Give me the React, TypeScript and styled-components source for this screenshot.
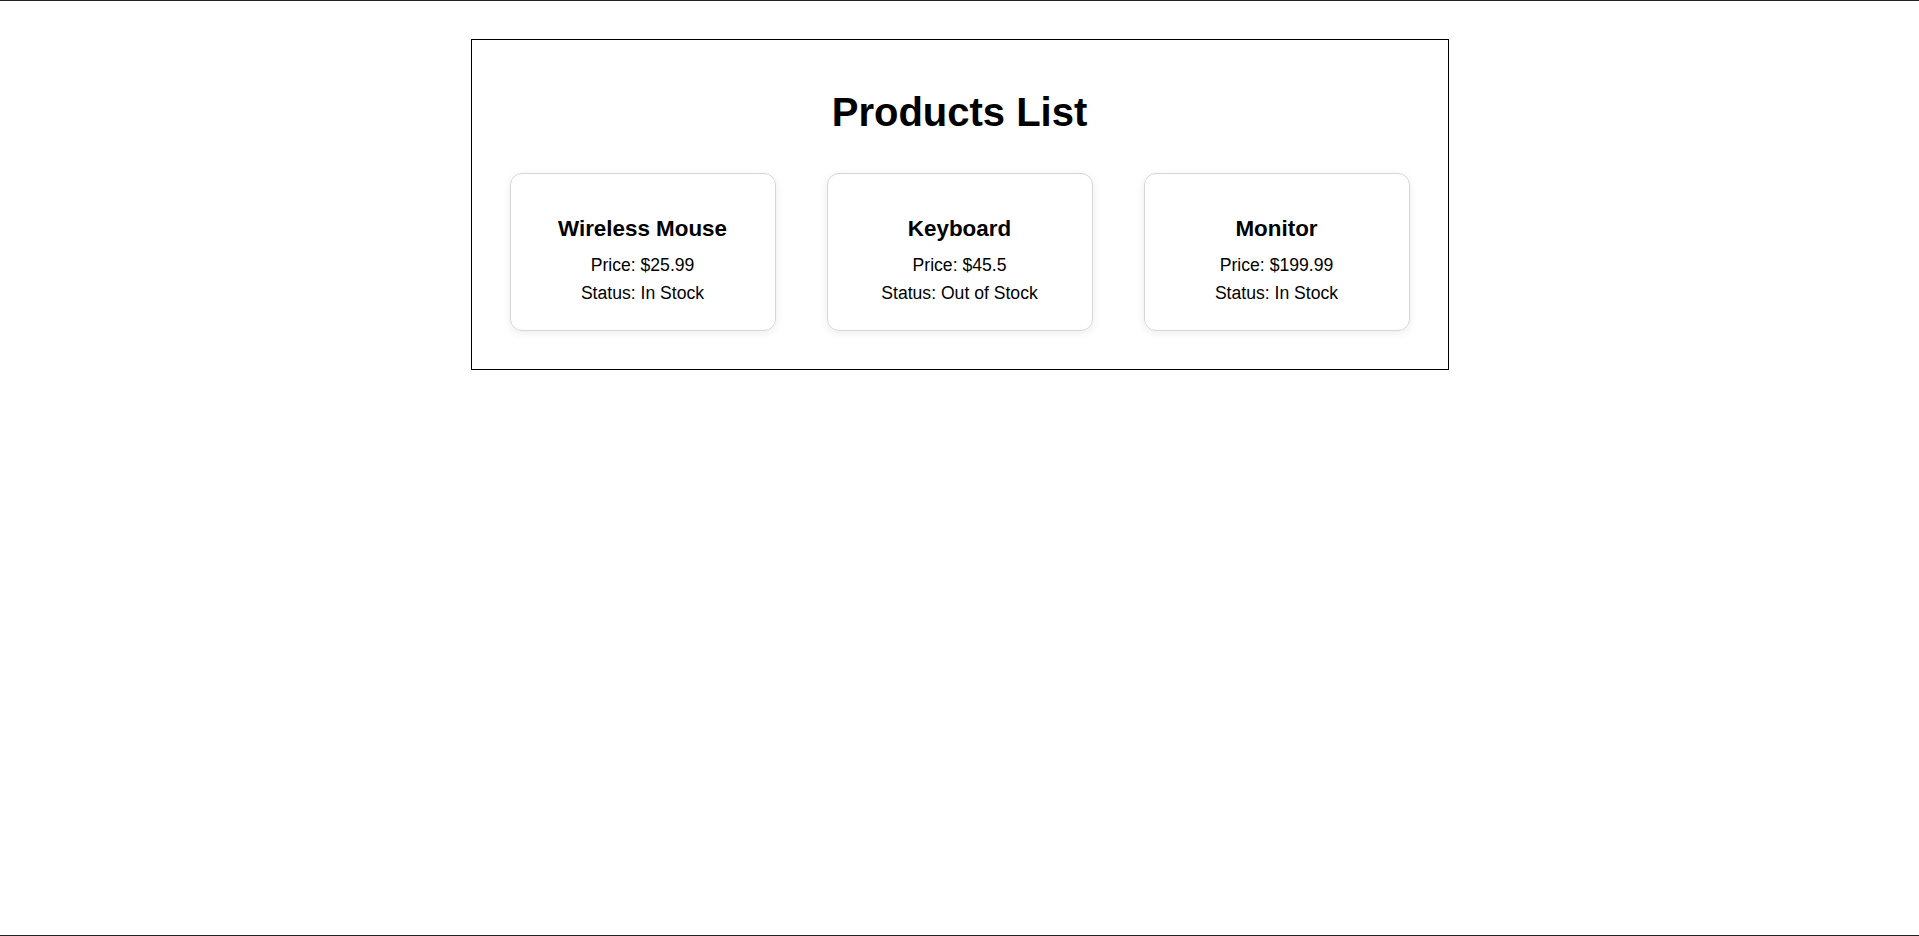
import styled, { createGlobalStyle } from "styled-components";

type Product = {
  name: string;
  price: number;
  inStock: boolean;
};

const products: Product[] = [
  { name: "Wireless Mouse", price: 25.99, inStock: true },
  { name: "Keyboard", price: 45.5, inStock: false },
  { name: "Monitor", price: 199.99, inStock: true },
];

export default function App() {
  return (
    <>
      <GlobalStyle />
      <Page>
        <Container>
          <Title>Products List</Title>
          <CardRow>
            {products.map((p) => (
              <Card key={p.name}>
                <CardTitle>{p.name}</CardTitle>
                <Line>Price: ${p.price}</Line>
                <Line>Status: {p.inStock ? "In Stock" : "Out of Stock"}</Line>
              </Card>
            ))}
          </CardRow>
        </Container>
      </Page>
    </>
  );
}

const GlobalStyle = createGlobalStyle`
  body {
    margin: 0;
    font-family: "Liberation Sans", Arial, sans-serif;
    color: #000;
    background: #fff;
  }
`;

const Page = styled.div`
  min-height: 100vh;
  box-sizing: border-box;
  border-top: 1px solid #222;
  border-bottom: 1px solid #222;
  padding-top: 38px;
`;

const Container = styled.div`
  width: 978px;
  box-sizing: border-box;
  margin: 0 auto;
  border: 1px solid #000;
  padding: 50px 38px 38px;
  display: flex;
  flex-direction: column;
  align-items: center;
`;

const Title = styled.h1`
  font-size: 40px;
  font-weight: bold;
  margin: 0 0 38px;
  line-height: normal;
  align-self: stretch;
  text-align: center;
`;

const CardRow = styled.div`
  display: flex;
  gap: 51px;
  align-self: stretch;
`;

const Card = styled.div`
  width: 266px;
  box-sizing: border-box;
  border: 1px solid #d6d6d6;
  border-radius: 12px;
  box-shadow: 0 2px 8px rgba(0, 0, 0, 0.08);
  padding: 42px 20px 26px;
  display: flex;
  flex-direction: column;
  align-items: center;
  gap: 7px;
`;

const CardTitle = styled.h3`
  font-size: 22.4px;
  font-weight: bold;
  margin: 0 0 6px;
  line-height: normal;
`;

const Line = styled.p`
  font-size: 17.6px;
  margin: 0;
  line-height: normal;
`;
